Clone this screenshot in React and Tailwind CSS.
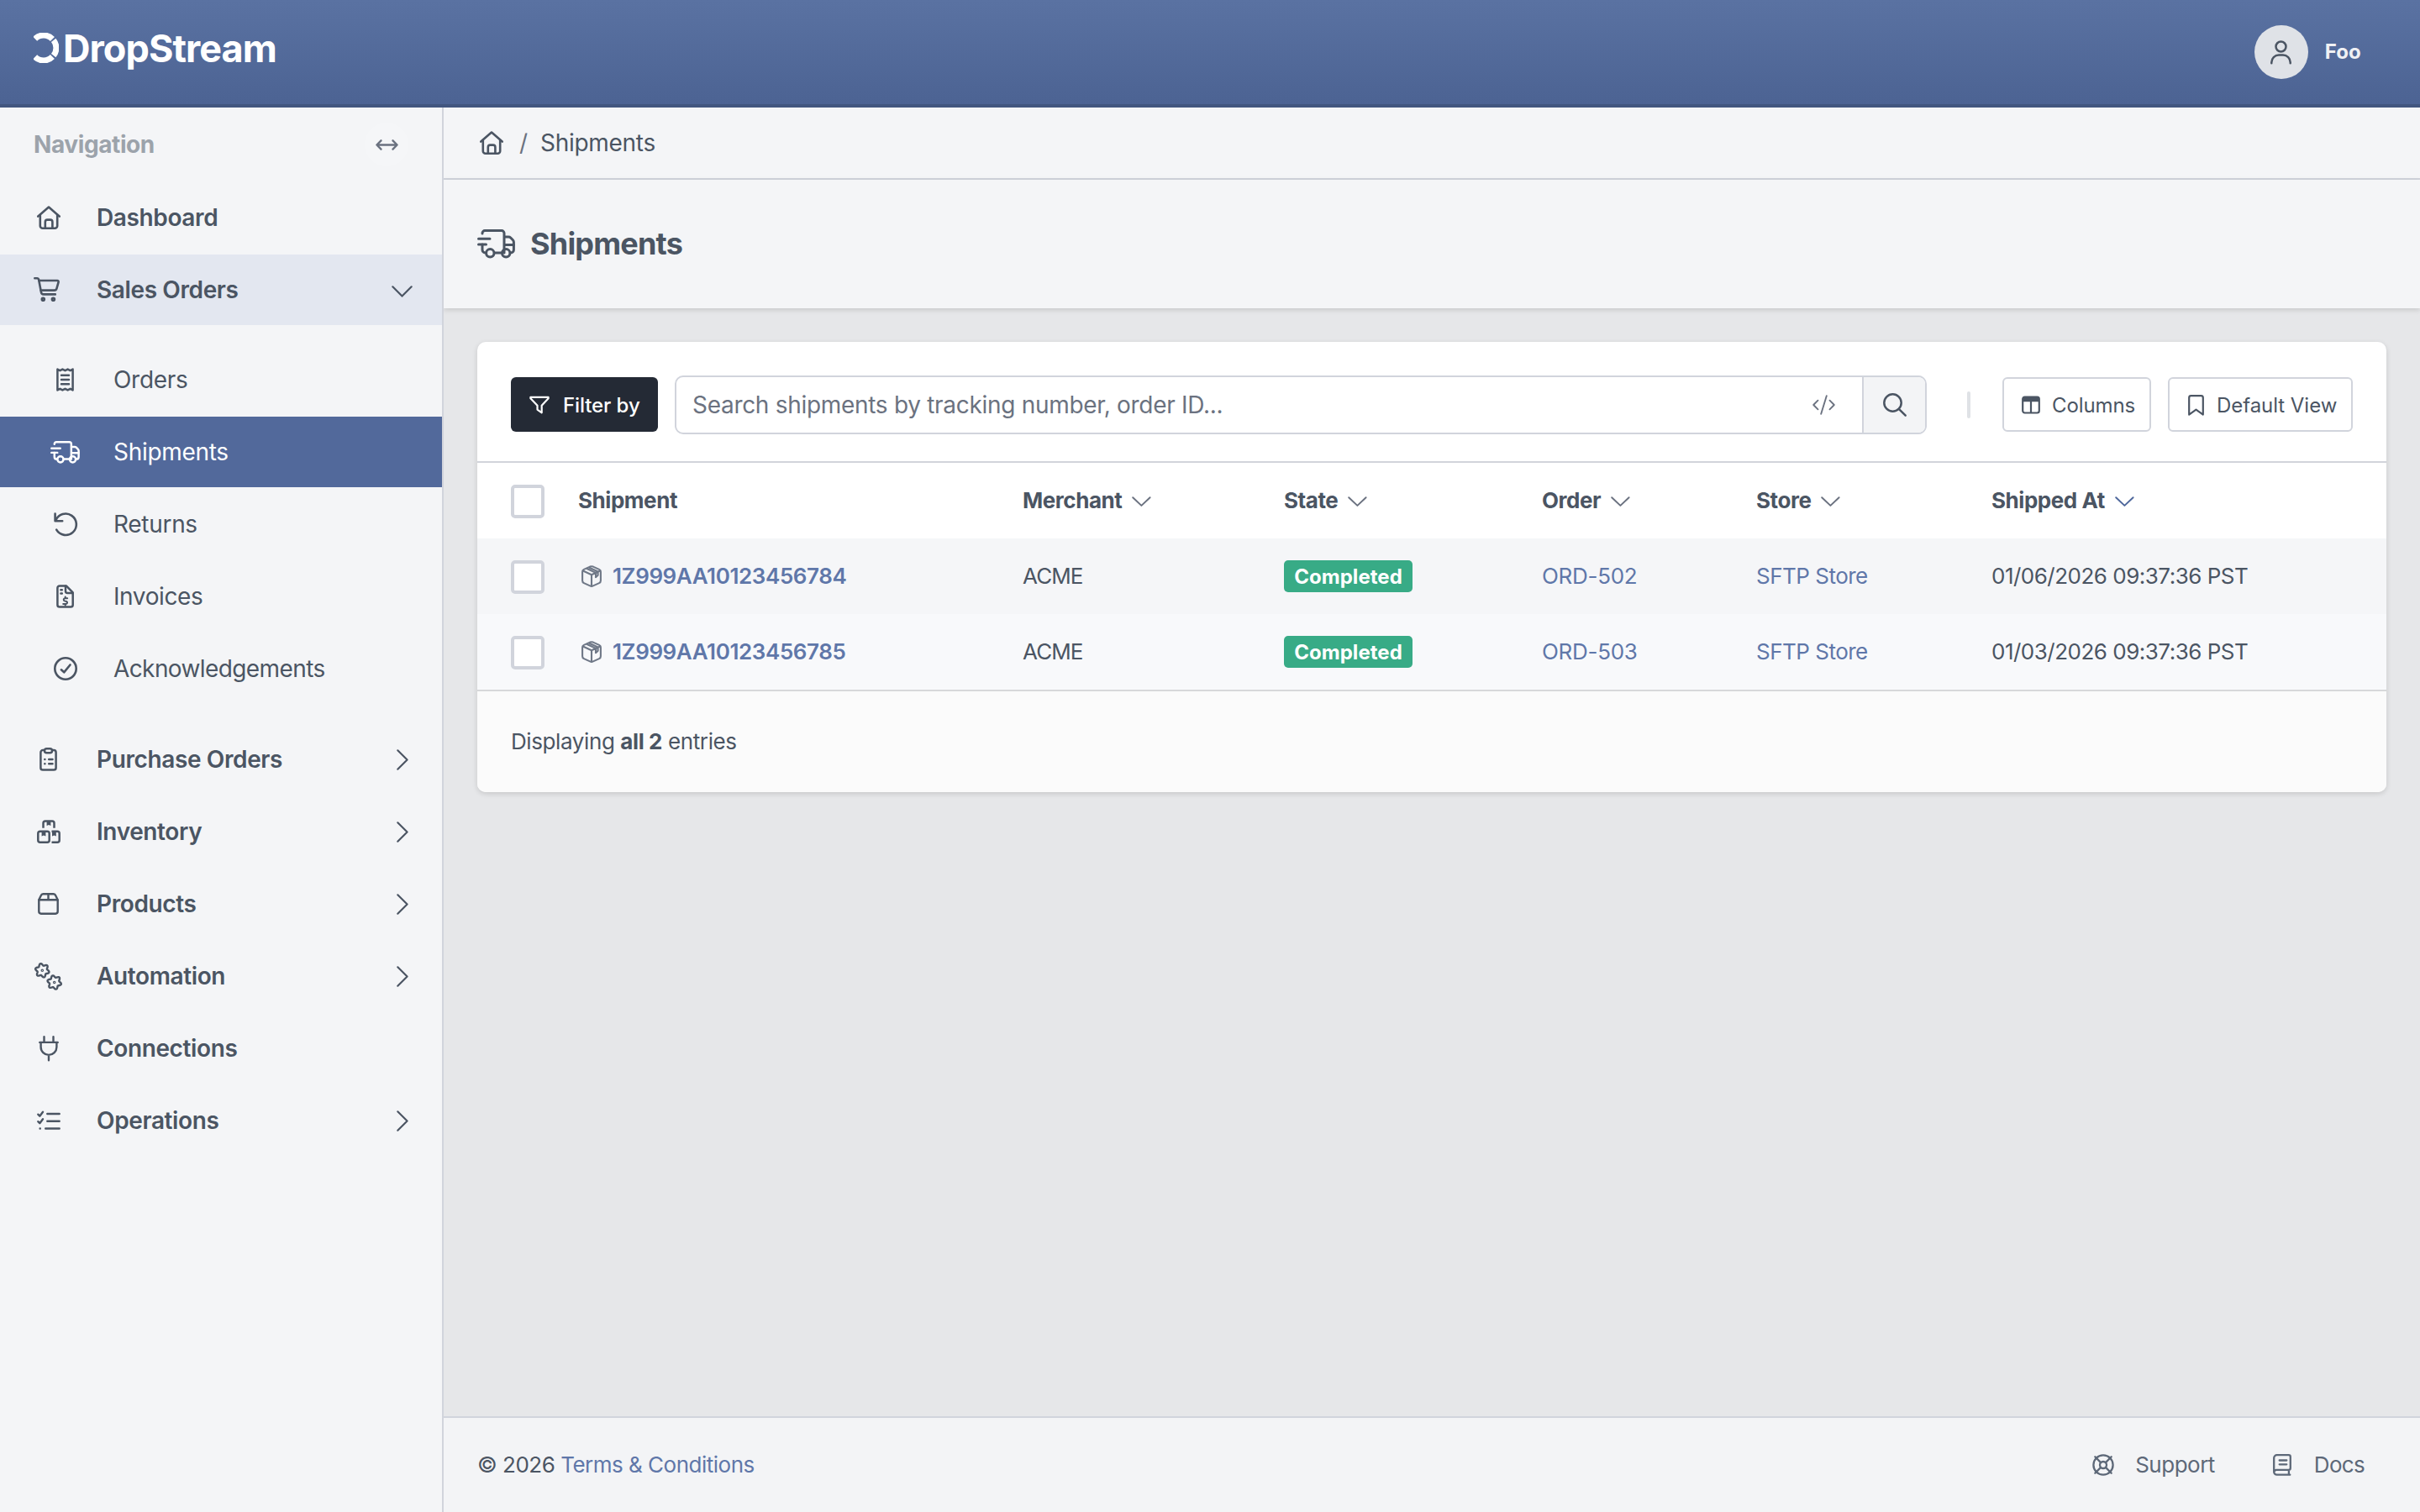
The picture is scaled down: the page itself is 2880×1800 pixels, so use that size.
import React from 'react';

// Base for all line icons
const Icon = ({ w, h, stroke = 2.6, className = '', children }) => (
  <svg
    width={w}
    height={h}
    viewBox={`0 0 ${w} ${h}`}
    fill="none"
    stroke="currentColor"
    strokeWidth={stroke}
    strokeLinecap="round"
    strokeLinejoin="round"
    className={`shrink-0 overflow-visible ${className}`}
  >
    {children}
  </svg>
);

const HomeIcon = () => (
  <Icon w={28} h={28}>
    <path d="M1.3 12.6 14 1.5l12.7 11.1" />
    <path d="M3.8 10.8v13.1a2.8 2.8 0 0 0 2.8 2.8h14.8a2.8 2.8 0 0 0 2.8-2.8V10.8" />
    <path d="M9.8 26.4v-7.2a2.6 2.6 0 0 1 2.6-2.6h3.4a2.6 2.6 0 0 1 2.6 2.6v7.2" />
  </Icon>
);

const CartIcon = () => (
  <Icon w={31} h={29} className="-translate-x-[2px] -translate-y-px">
    <path d="M1.3 1.3h3a1.8 1.8 0 0 1 1.8 1.5l2.9 15.3a2.8 2.8 0 0 0 2.8 2.3h14" />
    <path d="M6.4 4h21.8a1.5 1.5 0 0 1 1.4 1.9l-2.2 7.7a2.8 2.8 0 0 1-2.7 2H8.6" />
    <circle cx="11.3" cy="26.3" r="1.5" />
    <circle cx="23.4" cy="26.3" r="1.5" />
  </Icon>
);

const ReceiptIcon = () => (
  <Icon w={21} h={28} stroke={2.5}>
    <path d="M1.4 1.6v24.8l3-1.6 3 1.6 3.1-1.6 3.1 1.6 3-1.6 3 1.6V1.6l-3 1.6-3-1.6-3.1 1.6-3.1-1.6-3 1.6z" />
    <path d="M6 8.8h9M6 14h9M6 19.2h9" />
  </Icon>
);

const TruckIcon = ({ large }) => (
  <svg
    viewBox="0 0 45 35"
    fill="none"
    stroke="currentColor"
    strokeWidth={large ? 3 : 3.2}
    strokeLinecap="round"
    strokeLinejoin="round"
    className={large ? 'h-[35px] w-[45px] shrink-0' : 'h-[27px] w-[35px] shrink-0'}
  >
    <path d="M6 5v-.4a3 3 0 0 1 3-3h20a3 3 0 0 1 3 3V28" />
    <path d="M6 18v6.500a3.600 3.600 0 0 0 3.600 3.500M20.500 28H29" />
    <path d="M32.500 9h4.700a3.600 3.600 0 0 1 2.500 1l2.700 2.800a3.600 3.600 0 0 1 1 2.500v9.200A3.600 3.600 0 0 1 39.800 28" />
    <path d="M32.500 18.400h10.800M1.500 11.300H15M1.500 18h9" />
    <circle cx="15.300" cy="28.300" r="4.700" />
    <circle cx="34.200" cy="28.300" r="4.700" />
  </svg>
);

const ReturnIcon = () => (
  <Icon w={28} h={28}>
    <path d="M1.600 1.500v8.700h8.600" />
    <path d="M2.400 9.500a12.700 12.700 0 1 1 .8 11.200" />
  </Icon>
);

const InvoiceIcon = () => (
  <Icon w={21} h={28} stroke={2.5}>
    <path d="M1.400 4A2.600 2.600 0 0 1 4 1.400h7.800l7.900 8V24a2.600 2.600 0 0 1-2.600 2.600H4A2.600 2.600 0 0 1 1.400 24z" />
    <path d="M11 1.800v6a2.200 2.200 0 0 0 2.200 2.200h6M5.400 6.200h1.400M5.400 10.400h1.400" />
    <path
      strokeWidth="2"
      d="M13.200 16.300h-3a1.600 1.600 0 0 0-.4 3.100l2.200.6a1.600 1.600 0 0 1-.4 3.100H8.200M10.700 14.500v1.600M10.700 23.300v1.400"
    />
  </Icon>
);

const CheckCircleIcon = () => (
  <Icon w={28} h={28}>
    <circle cx="14" cy="14" r="12.7" />
    <path d="m8.900 15.300 3.300 3 7.300-8.800" />
  </Icon>
);

const ClipboardIcon = () => (
  <Icon w={21} h={28} stroke={2.5}>
    <path d="M5.500 3.100H4a2.600 2.600 0 0 0-2.600 2.600V24A2.600 2.600 0 0 0 4 26.600h13a2.600 2.600 0 0 0 2.600-2.600V5.700A2.600 2.600 0 0 0 17 3.100h-1.500" />
    <rect x="6" y="1.3" width="9" height="5" rx="2.5" />
    <path d="M6.300 14h.1M6.300 19.200h.1M11.200 14h4.300M11.200 19.200h4.300" />
  </Icon>
);

const BoxesIcon = () => (
  <Icon w={28} h={28} stroke={2.5}>
    <path strokeLinecap="butt" d="M7.500 9.700V3.900A2.500 2.500 0 0 1 10 1.400h8a2.500 2.500 0 0 1 2.500 2.500v5.800" />
    <rect x="1.3" y="13.7" width="13.4" height="13" rx="2.5" />
    <path strokeLinecap="butt" d="M17.500 13.700h6.700a2.500 2.500 0 0 1 2.500 2.500v8a2.500 2.500 0 0 1-2.500 2.500h-6.700" />
    <path
      fill="currentColor"
      stroke="none"
      d="M11.600 1.500h4.800v5.600L14 6l-2.400 1.100zM5.600 13.700h4.800v5.800L8 18.400l-2.400 1.100zM18 13.700h4.800v5.800l-2.400-1.100-2.400 1.100z"
    />
  </Icon>
);

const ProductIcon = () => (
  <Icon w={25} h={26} stroke={2.4}>
    <path d="M1.300 8.200v13.900a2.600 2.600 0 0 0 2.600 2.600h17.200a2.600 2.600 0 0 0 2.600-2.600V8.200l-2.400-5a3 3 0 0 0-2.700-1.900H6.400a3 3 0 0 0-2.700 1.900z" />
    <path d="M1.500 8.200h22M12.500 1.500v6.700" />
  </Icon>
);

// Six-toothed outline, sampled every 6 degrees
const gearPath = (cx, cy, turn) => {
  const points = [];
  for (let deg = 0; deg < 360; deg += 6) {
    const a = (deg * Math.PI) / 180;
    const r = 7.1 + 1.3 * Math.cos(6 * (a - turn));
    points.push(`${(cx + r * Math.cos(a)).toFixed(2)} ${(cy + r * Math.sin(a)).toFixed(2)}`);
  }
  return `M${points.join('L')}Z`;
};

const GearsIcon = () => (
  <Icon w={33} h={33} stroke={2.4}>
    <path d={gearPath(9.3, 9.3, 0.26)} />
    <path d={gearPath(23.7, 23.5, 0.26)} />
    <circle cx="9.3" cy="9.3" r=".6" />
    <circle cx="23.7" cy="23.5" r=".6" />
  </Icon>
);

const PlugIcon = () => (
  <Icon w={24} h={30} stroke={2.4}>
    <path d="M6.500 1.200v6.500M17.500 1.200v6.500M1.300 7.900h21.400M2.600 7.900v5.600a9.400 9.400 0 0 0 18.800 0V7.900M12 23.200v6" />
  </Icon>
);

const TasksIcon = () => (
  <Icon w={28} h={24} stroke={2.4}>
    <path d="M12.300 4h14.400M12.300 12.700h14.400M10.200 21.500h16.500" />
    <path d="m1.300 4.700 2 2L7 1.800M1.300 13.200l2 2L7 10.300M3.600 21.500h.2" />
  </Icon>
);

const ChevronDown = () => (
  <Icon w={25} h={14} stroke={2.2} className="mt-[3px] mr-px">
    <path d="m1.300 1.300 11.200 11.300L23.700 1.300" />
  </Icon>
);

const ChevronRight = () => (
  <Icon w={14} h={25} stroke={2.2} className="mr-[6px]">
    <path d="m1.300 1.300 11.300 11.200L1.300 23.700" />
  </Icon>
);

const SortIcon = ({ active }) => (
  <Icon w={23} h={12} stroke={2} className={active ? 'mt-[2px] text-[#4f689c]' : 'mt-[2px] text-[#6b7280]'}>
    <path d="m1.200 1.200 10.200 9.700L21.600 1.200" />
  </Icon>
);

const ResizeIcon = () => (
  <Icon w={27} h={13} stroke={2.4}>
    <path d="M1.600 6.500h23.800M6.500 1.300 1.400 6.500l5.100 5.200M20.500 1.300l5.100 5.200-5.100 5.200" />
  </Icon>
);

const PackageIcon = () => (
  <Icon w={24} h={26} stroke={2.1} className="text-[#6f7887]">
    <path d="M12 1.200c.7 0 1.300.2 1.900.4l7.200 3.300a3 3 0 0 1 1.800 2.800v10.600a3 3 0 0 1-1.800 2.800l-7.200 3.300a4.500 4.500 0 0 1-3.800 0l-7.200-3.300a3 3 0 0 1-1.800-2.800V7.700a3 3 0 0 1 1.800-2.800l7.200-3.300c.6-.2 1.200-.4 1.900-.4z" />
    <path d="M1.800 6.500 12 11.200l10.200-4.700M12 11.200v13.400M6.600 4 17 8.900v5.300M9.400 2.800l10.200 4.700v4.300L17 14.200" />
  </Icon>
);

const FilterIcon = () => (
  <Icon w={24} h={22} stroke={2.2} className="mt-px">
    <path d="M1.400 1.800h21.200v1.500l-7.900 8.500v8.500l-5.200-3.700v-4.800L1.400 3.300z" />
  </Icon>
);

const CodeIcon = () => (
  <Icon w={27} h={24} stroke={1.9} className="text-[#6b7280]">
    <path d="M6.500 6.700 1.200 12l5.300 5.300M20.500 6.700l5.300 5.300-5.300 5.300M16.800 1.200l-6.600 21.600" />
  </Icon>
);

const SearchIcon = () => (
  <Icon w={28} h={28} stroke={2.5}>
    <circle cx="11.5" cy="11.5" r="10.2" />
    <path d="m18.800 18.800 7.900 7.900" />
  </Icon>
);

const ColumnsIcon = () => (
  <Icon w={22} h={22} stroke={2.2} className="mt-px">
    <rect x="1.2" y="1.5" width="19.6" height="19" rx="2.4" />
    <path fill="currentColor" stroke="none" d="M1.200 2.500a2 2 0 0 1 2-1.500h15.600a2 2 0 0 1 2 1.500v4.800H1.200z" />
    <path d="M11 6v14" />
  </Icon>
);

const BookmarkIcon = () => (
  <Icon w={19} h={25} stroke={2.2} className="mt-px">
    <path d="M1.200 23.600V3.500a2.300 2.300 0 0 1 2.300-2.300h12a2.300 2.300 0 0 1 2.300 2.300v20.100l-8.300-5.900z" />
  </Icon>
);

const UserIcon = () => (
  <Icon w={25} h={29} stroke={2.5}>
    <circle cx="12.5" cy="7.5" r="6" />
    <path d="M1.300 27.300v-1a8.700 8.700 0 0 1 8.700-8.700h5a8.700 8.700 0 0 1 8.700 8.700v1" />
  </Icon>
);

const SupportIcon = () => (
  <Icon w={26} h={26} stroke={2.3}>
    <circle cx="13" cy="13" r="11.6" />
    <circle cx="13" cy="13" r="4" />
    <path d="m3.300 3.300 6.800 6.800M22.700 3.300l-6.800 6.800M3.300 22.700l6.800-6.800M22.700 22.700l-6.800-6.800" />
  </Icon>
);

const BookIcon = () => (
  <Icon w={22} h={26} stroke={2.3}>
    <path d="M20.300 24.700H4.700a3.500 3.500 0 0 1-3.500-3.500V4.700a3.500 3.500 0 0 1 3.500-3.500h14a2.100 2.100 0 0 1 2.100 2.100v13.400a2.100 2.100 0 0 1-2.100 2.100H4.400a3 3 0 0 0-3.100 2.500M18.900 19v5.500M7.700 7.500h8.600M7.700 12.300h8.600" />
  </Icon>
);

const Logo = () => (
  <div className="flex items-center text-white">
    <svg width="30" height="36" viewBox="0 0 30 36" fill="none" stroke="currentColor" strokeWidth="7" className="mr-[5px] shrink-0">
      <path d="M1.700 7.200a14.500 14.500 0 0 1 20.700.3" />
      <path d="M23.700 8.900a14.500 14.500 0 0 1 0 18.200" />
      <path d="M22.400 28.500a14.500 14.500 0 0 1-20.700.3" />
    </svg>
    <span className="text-[45px] leading-none font-bold tracking-[-0.95px]">DropStream</span>
  </div>
);

const salesChildren = [
  { label: 'Orders', icon: ReceiptIcon, tracking: 'tracking-[-0.3px]' },
  { label: 'Shipments', icon: TruckIcon, active: true, tracking: 'tracking-[-0.3px]' },
  { label: 'Returns', icon: ReturnIcon, tracking: 'tracking-[-0.3px]' },
  { label: 'Invoices', icon: InvoiceIcon, tracking: 'tracking-[-0.4px]' },
  { label: 'Acknowledgements', icon: CheckCircleIcon, tracking: 'tracking-[-0.6px]' },
];

const sections = [
  { label: 'Purchase Orders', icon: ClipboardIcon, expandable: true },
  { label: 'Inventory', icon: BoxesIcon, expandable: true },
  { label: 'Products', icon: ProductIcon, expandable: true },
  { label: 'Automation', icon: GearsIcon, expandable: true },
  { label: 'Connections', icon: PlugIcon },
  { label: 'Operations', icon: TasksIcon, expandable: true },
];

const NavItem = ({ item, open }) => {
  const ItemIcon = item.icon;
  return (
    <a className={`flex h-[84px] items-center pr-[34px] pl-10 ${open ? 'bg-[#e3e7f0]' : ''}`}>
      <span className="flex w-[35px] justify-center">
        <ItemIcon />
      </span>
      <span className="ml-10 flex-1 font-semibold tracking-[-0.38px]">{item.label}</span>
      {open && <ChevronDown />}
      {item.expandable && <ChevronRight />}
    </a>
  );
};

const Sidebar = () => (
  <aside className="relative z-10 flex w-[528px] shrink-0 flex-col border-r-2 border-[#d1d4dc] bg-[#f4f5f7] text-[28px]">
    <div className="flex h-[88px] items-center justify-between pr-10 pl-10">
      <h2 className="font-bold tracking-[-0.4px] text-[#9ca3ab]">Navigation</h2>
      <button className="flex size-[52px] items-center justify-center rounded-full bg-white/10 text-[#6b7280]">
        <ResizeIcon />
      </button>
    </div>
    <nav className="flex flex-col gap-[2px] pt-px">
      <NavItem item={{ label: 'Dashboard', icon: HomeIcon }} />
      <NavItem item={{ label: 'Sales Orders', icon: CartIcon }} open />
      <div className="flex flex-col gap-[2px] pt-[21px] pb-[22px]">
        {salesChildren.map(({ label, icon: ItemIcon, active, tracking }) => (
          <a key={label} className={`flex h-[84px] items-center pl-[60px] ${active ? 'bg-[#52699b] text-white' : ''}`}>
            <span className="flex w-[35px] justify-center">
              <ItemIcon />
            </span>
            <span className={`ml-10 ${tracking}`}>{label}</span>
          </a>
        ))}
      </div>
      {sections.map((item) => (
        <NavItem key={item.label} item={item} />
      ))}
    </nav>
  </aside>
);

const columns = [
  { label: 'Shipment' },
  { label: 'Merchant', sortable: true },
  { label: 'State', sortable: true },
  { label: 'Order', sortable: true },
  { label: 'Store', sortable: true },
  { label: 'Shipped At', sortable: true, active: true },
];

const shipments = [
  { tracking: '1Z999AA10123456784', merchant: 'ACME', state: 'Completed', order: 'ORD-502', store: 'SFTP Store', shippedAt: '01/06/2026 09:37:36 PST' },
  { tracking: '1Z999AA10123456785', merchant: 'ACME', state: 'Completed', order: 'ORD-503', store: 'SFTP Store', shippedAt: '01/03/2026 09:37:36 PST' },
];

const rowGrid = 'grid h-[90px] grid-cols-[80px_529px_311px_307px_255px_280px_1fr] items-center pl-10 leading-[38px]';

const Checkbox = () => <span className="mt-[2px] size-10 rounded-[5px] border-4 border-[#d1d4dc] bg-white" />;

const Toolbar = () => (
  <div className="flex h-[144px] items-start border-b-2 border-[#d1d4da] px-10 pt-10">
    <button className="mt-[2px] flex h-[65px] w-[175px] items-center rounded-[6px] bg-[#242a35] pl-[22px] text-[24px] font-medium text-white">
      <FilterIcon />
      <span className="ml-4 pt-[2px] tracking-[-0.1px]">Filter by</span>
    </button>
    <div className="ml-5 flex h-[70px] w-[1490px] overflow-hidden rounded-[10px] border-2 border-[#d1d4dc]">
      <div className="flex flex-1 items-center justify-between pr-8 pl-[19px]">
        <span className="text-[28px] tracking-[-0.3px] text-[#6b7280]">Search shipments by tracking number, order ID...</span>
        <CodeIcon />
      </div>
      <button className="flex w-[75px] items-center justify-center border-l-2 border-[#d1d4dc] bg-[#f3f4f6]">
        <SearchIcon />
      </button>
    </div>
    <div className="mt-[19px] ml-12 h-8 w-1 rounded-full bg-[#dfe2e6]" />
    <div className="mt-[2px] ml-auto flex gap-5 text-[24px]">
      <button className="flex h-[65px] w-[177px] items-center rounded-[6px] border-2 border-[#d1d4dc] pl-[21px]">
        <ColumnsIcon />
        <span className="ml-[14px] pt-[2px] tracking-[-0.1px]">Columns</span>
      </button>
      <button className="flex h-[65px] w-[220px] items-center rounded-[6px] border-2 border-[#d1d4dc] pl-[22px]">
        <BookmarkIcon />
        <span className="ml-[15px] pt-[2px] tracking-[-0.05px]">Default View</span>
      </button>
    </div>
  </div>
);

const ShipmentsCard = () => (
  <section className="overflow-hidden rounded-[10px] bg-white text-[26px] shadow-[0_2px_6px_rgba(0,0,0,0.14)]">
    <Toolbar />
    <div className={`${rowGrid} font-[650] tracking-[-0.45px]`}>
      <Checkbox />
      {columns.map((col) => (
        <span key={col.label} className="flex items-center gap-[12px]">
          {col.label}
          {col.sortable && <SortIcon active={col.active} />}
        </span>
      ))}
    </div>
    {shipments.map((row) => (
      <div key={row.tracking} className={`${rowGrid} bg-[#f8f9fb] odd:bg-[#f5f6f8]`}>
        <Checkbox />
        <a className="flex items-center gap-[13px] pl-1 font-semibold tracking-[-0.4px] text-[#5f77a9]">
          <PackageIcon />
          {row.tracking}
        </a>
        <span className="tracking-[-0.9px]">{row.merchant}</span>
        <span className="flex h-[38px] w-[153px] items-center justify-center rounded-[5px] bg-[#38ab86] pt-[2px] text-[24px] font-bold tracking-[0.05px] text-white">
          {row.state}
        </span>
        <a className="tracking-[-0.3px] text-[#5f77a9]">{row.order}</a>
        <a className="tracking-[-0.5px] text-[#5f77a9]">{row.store}</a>
        <span className="tracking-[-0.5px]">{row.shippedAt}</span>
      </div>
    ))}
    <div className="flex h-[122px] items-center border-t-2 border-[#d7d8da] bg-[#fbfbfb] px-10">
      <p className="leading-[38px] tracking-[-0.4px]">
        Displaying <b>all 2</b> entries
      </p>
    </div>
  </section>
);

export default function App() {
  return (
    <div className="flex h-[1800px] w-[2880px] flex-col overflow-hidden bg-[#e6e7e9] font-['Inter',sans-serif] text-[#4b5563]">
      <header className="flex h-32 shrink-0 items-center justify-between border-b-4 border-[#42567f] bg-linear-to-b from-[#5a72a2] to-[#4c6393] pr-[70px] pb-0 pl-10">
        <div className="pb-[10px]">
          <Logo />
        </div>
        <div className="flex items-center">
          <span className="flex size-16 items-center justify-center rounded-full bg-[#dfe2e7]">
            <UserIcon />
          </span>
          <span className="ml-5 text-[24px] font-bold tracking-[0.15px] text-[#f0f1f4]">Foo</span>
        </div>
      </header>

      <div className="flex min-h-0 flex-1">
        <Sidebar />

        <main className="flex min-w-0 flex-1 flex-col">
          {/* Breadcrumbs */}
          <div className="flex h-[86px] shrink-0 items-center border-b-2 border-[#d1d4dc] bg-[#f4f5f7] pl-[43px] text-[28px]">
            <HomeIcon />
            <span className="ml-[19px] text-[#6b7280]">/</span>
            <span className="ml-[15px] tracking-[-0.3px]">Shipments</span>
          </div>

          <div className="flex h-[153px] shrink-0 items-center bg-[#f4f5f7] pl-10 shadow-[0_2px_6px_rgba(0,0,0,0.14)]">
            <TruckIcon large />
            <h1 className="ml-[18px] pb-px text-[36px] font-bold tracking-[-0.8px]">Shipments</h1>
          </div>

          <div className="flex-1 p-10">
            <ShipmentsCard />
          </div>

          <footer className="flex h-[114px] shrink-0 items-center justify-between border-t-2 border-[#d1d4dc] bg-[#f3f4f6] pr-[66px] pl-10 text-[26px] leading-[38px]">
            <p className="tracking-[-0.5px]">
              © 2026 <a className="text-[#5f77a9]">Terms &amp; Conditions</a>
            </p>
            <div className="flex items-center text-[#5d6878]">
              <SupportIcon />
              <span className="ml-[25px] tracking-[-0.5px]">Support</span>
              <span className="ml-[69px] flex items-center">
                <BookIcon />
                <span className="ml-[27px] tracking-[-0.7px]">Docs</span>
              </span>
            </div>
          </footer>
        </main>
      </div>
    </div>
  );
}
